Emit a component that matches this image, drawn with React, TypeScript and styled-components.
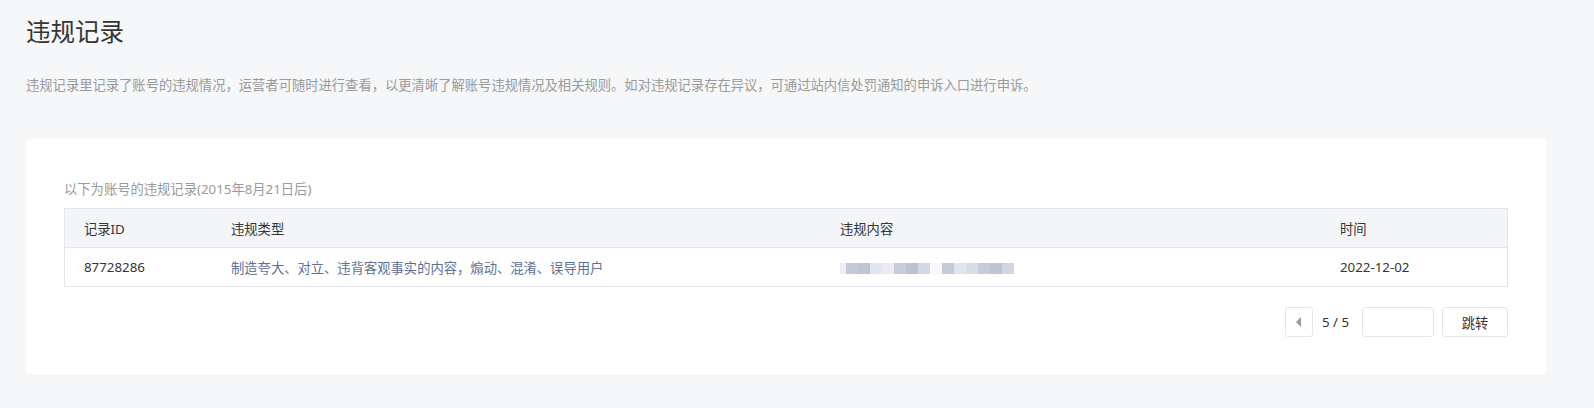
import React from "react";
import styled, { createGlobalStyle } from "styled-components";

const GlobalStyle = createGlobalStyle`
  html, body { margin: 0; padding: 0; background: #f6f7f9; }
  body {
    font-family: "Noto Sans", "Noto Sans CJK SC", sans-serif;
    color: #353535;
  }
  * { box-sizing: border-box; }
`;

const Page = styled.div`
  width: 1594px;
  height: 408px;
  padding: 16px 48px 0 26px;
  background: #f6f7f9;
`;

const Title = styled.h2`
  margin: 0;
  font-size: 24.5px;
  line-height: 32px;
  font-weight: 400;
  color: #353535;
`;

const Desc = styled.p`
  margin: 27px 0 0;
  font-size: 13.3px;
  line-height: 20px;
  color: #9a9a9a;
`;

const Card = styled.section`
  margin-top: 44px;
  background: #fff;
  border-radius: 4px;
  padding: 40px 38px 37px;
  height: 235px;
`;

const Caption = styled.div`
  font-size: 13.3px;
  line-height: 20px;
  color: #9a9a9a;
  margin-bottom: 9px;
`;

const Table = styled.div`
  border: 1px solid #e4e6eb;
`;

const Row = styled.div<{ $head?: boolean }>`
  display: grid;
  grid-template-columns: 147px 609px 500px 1fr;
  height: ${(p) => (p.$head ? "38px" : "39px")};
  align-items: center;
  background: ${(p) => (p.$head ? "#f4f5f8" : "#fff")};
  border-top: ${(p) => (p.$head ? "none" : "1px solid #e4e6eb")};
  font-size: 13.3px;
  color: #353535;
`;

const Cell = styled.div<{ $link?: boolean }>`
  padding-left: 19px;
  color: ${(p) => (p.$link ? "#5f6f96" : "#353535")};
  white-space: nowrap;
`;

const Mosaic = styled.div`
  margin-left: 19px;
  display: flex;
  align-items: flex-end;
  height: 12px;
  margin-top: 1px;
`;

const Tile = styled.span<{ $c: string; $w: number }>`
  display: block;
  width: ${(p) => p.$w}px;
  height: 11px;
  background: ${(p) => p.$c};
`;

const Pager = styled.div`
  display: flex;
  justify-content: flex-end;
  align-items: center;
  margin-top: 20px;
`;

const PrevBtn = styled.button`
  width: 28px;
  height: 30px;
  border: 1px solid #e4e6eb;
  border-radius: 3px;
  background: #fff;
  display: flex;
  align-items: center;
  justify-content: center;
  padding: 0;
`;

const PageText = styled.span`
  margin: 0 13px 0 9px;
  font-size: 13.3px;
  color: #353535;
`;

const JumpInput = styled.input`
  width: 72px;
  height: 30px;
  border: 1px solid #e4e6eb;
  border-radius: 3px;
  outline: none;
`;

const JumpBtn = styled.button`
  margin-left: 8px;
  width: 66px;
  height: 30px;
  border: 1px solid #e4e6eb;
  border-radius: 3px;
  background: #fff;
  font-family: "Noto Sans", "Noto Sans CJK SC", sans-serif;
  font-size: 13.3px;
  color: #353535;
  padding: 0;
`;

const tiles: [string, number][] = [
  ["#eceef3", 6], ["#c4c9d8", 12], ["#bfc5d6", 12], ["#e3e6ee", 12], ["#eaecf1", 12],
  ["#c8ccda", 12], ["#bcc2d4", 12], ["#d4d8e3", 12], ["#f7f8fa", 12], ["#c6cbd9", 12],
  ["#e2e5ec", 12], ["#d8dce5", 12], ["#c7ccda", 12], ["#bfc4d5", 12], ["#d2d6e1", 12],
];

export default function App() {
  return (
    <>
      <GlobalStyle />
      <Page>
        <Title>违规记录</Title>
        <Desc>
          违规记录里记录了账号的违规情况，运营者可随时进行查看，以更清晰了解账号违规情况及相关规则。如对违规记录存在异议，可通过站内信处罚通知的申诉入口进行申诉。
        </Desc>
        <Card>
          <Caption>以下为账号的违规记录(2015年8月21日后)</Caption>
          <Table>
            <Row $head>
              <Cell>记录ID</Cell>
              <Cell>违规类型</Cell>
              <Cell>违规内容</Cell>
              <Cell>时间</Cell>
            </Row>
            <Row>
              <Cell>87728286</Cell>
              <Cell $link>制造夸大、对立、违背客观事实的内容，煽动、混淆、误导用户</Cell>
              <Mosaic>
                {tiles.map(([c, w], i) => (
                  <Tile key={i} $c={c} $w={w} />
                ))}
              </Mosaic>
              <Cell>2022-12-02</Cell>
            </Row>
          </Table>
          <Pager>
            <PrevBtn aria-label="上一页">
              <svg width="6" height="10" viewBox="0 0 6 10">
                <path d="M5 0 L0 5 L5 10 Z" fill="#9a9a9a" />
              </svg>
            </PrevBtn>
            <PageText>5 / 5</PageText>
            <JumpInput />
            <JumpBtn>跳转</JumpBtn>
          </Pager>
        </Card>
      </Page>
    </>
  );
}
